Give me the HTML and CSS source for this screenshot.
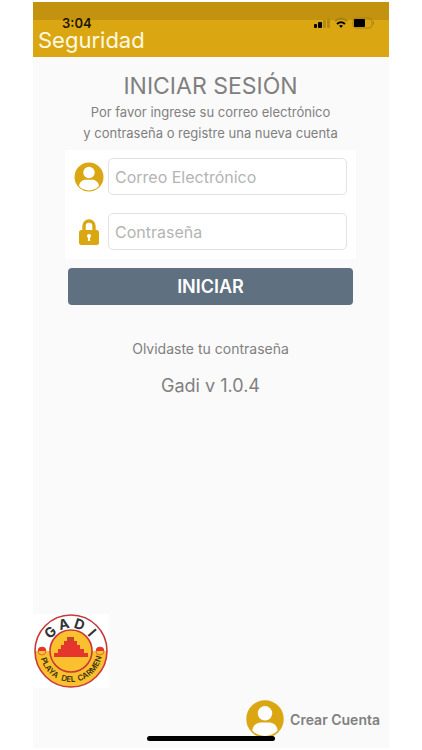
FILE: index.html
```html
<!DOCTYPE html>
<html lang="es">
<head>
<meta charset="utf-8">
<meta name="viewport" content="width=device-width, initial-scale=1">
<title>Seguridad</title>
<link rel="stylesheet" href="styles.css">
</head>
<body>
<div class="app">
  <header class="header">
    <div class="status">
      <span class="time">3:04</span>
      <svg class="status-icons" width="62" height="12" viewBox="0 0 62 12" aria-hidden="true">
        <rect x="0" y="7" width="3" height="4" rx="1"/>
        <rect x="4" y="5" width="4" height="6" rx="1"/>
        <g fill="#b58b12"><rect x="9" y="3" width="3" height="8" rx="1"/><rect x="13" y="1" width="3" height="10" rx="1"/></g>
        <g fill="none" stroke-width="2">
          <path d="M21 4Q27 -1 33 4" stroke="#a98110"/>
          <path d="M23 7Q27 3.5 31 7" stroke="#000"/>
        </g>
        <path d="M25 8.6Q27 7.3 29 8.6L27 11Z"/>
        <rect x="39" y="1" width="19" height="10" rx="3" fill="none" stroke="#a98110"/>
        <rect x="40" y="2" width="11" height="8" rx="1"/>
        <path d="M59 4q2 2 0 4z" fill="#a98110"/>
      </svg>
    </div>
    <div class="title">Seguridad</div>
  </header>
  <main class="main">
    <h1 class="heading">INICIAR SESIÓN</h1>
    <p class="intro">Por favor ingrese su correo electrónico<br>y contraseña o registre una nueva cuenta</p>
    <form class="login">
      <div class="fields">
        <div class="field">
          <label class="field-icon" for="email" aria-label="Correo Electrónico">
            <svg width="30" height="30" viewBox="0 0 30 30" aria-hidden="true">
              <circle cx="15" cy="15" r="14.5" fill="#daa712"/>
              <circle cx="15" cy="10.500" r="5.700" fill="#fff"/>
              <path d="M5 24C5.500 19.500 9 17.700 12 17.700h6c3 0 6.500 1.800 7 6.300A13.500 13.500 0 0 1 5 24Z" fill="#fff"/>
            </svg>
          </label>
          <input class="input" id="email" type="email" placeholder="Correo Electrónico">
        </div>
        <div class="field">
          <label class="field-icon" for="password" aria-label="Contraseña">
            <svg width="22" height="28" viewBox="0 0 22 28" aria-hidden="true">
              <path d="M6 13V8a5 5 0 0 1 10 0v5" fill="none" stroke="#daa712" stroke-width="3.400"/>
              <rect x="1" y="12" width="20" height="15" rx="2.500" fill="#daa712"/>
              <circle cx="11" cy="18" r="2" fill="#fff"/>
              <path d="M10.300 18h1.400l.5 5h-2.400z" fill="#fff"/>
            </svg>
          </label>
          <input class="input" id="password" type="password" placeholder="Contraseña">
        </div>
      </div>
      <button class="submit" type="button">INICIAR</button>
    </form>
    <a class="forgot" href="#">Olvidaste tu contraseña</a>
    <p class="version">Gadi v 1.0.4</p>
  </main>
  <footer class="footer">
    <svg class="logo" width="76" height="74" viewBox="0 0 76 74" role="img" aria-label="Gadi Playa del Carmen">
      <defs><path id="lower-arc" d="M7 37a31 31 0 0 0 62 0"/></defs>
      <rect width="76" height="74" fill="#fff"/>
      <path d="M2 37a36 36 0 0 0 72 0z" fill="#fac02d"/>
      <circle cx="38" cy="37" r="36" fill="none" stroke="#c9383c" stroke-width="1.600"/>
      <circle cx="38" cy="37" r="21" fill="#fac02d" stroke="#c9383c" stroke-width="1.600"/>
      <g fill="#e5352c">
        <rect x="34" y="23" width="7" height="4" fill="#b94b2b"/>
        <rect x="31" y="27" width="13" height="4"/>
        <rect x="28" y="31" width="19" height="4"/>
        <rect x="25" y="35" width="26" height="4"/>
        <rect x="21" y="39" width="34" height="4"/>
      </g>
      <g fill="#fac02d" stroke="#c9383c" stroke-width=".6"><circle cx="9" cy="37" r="4"/><circle cx="67" cy="37" r="4"/></g>
      <path d="M5 37a4 4 0 0 1 8 0zM63 37a4 4 0 0 1 8 0z" fill="#e5352c"/>
      <g class="logo-name">
        <text x="38" y="14" transform="rotate(-48 38 37)">G</text>
        <text x="38" y="14" transform="rotate(-15 38 37)">A</text>
        <text x="38" y="14" transform="rotate(18 38 37)">D</text>
        <text x="38" y="14" transform="rotate(49 38 37)">I</text>
      </g>
      <g class="logo-place">
        <text><textPath href="#lower-arc" startOffset="21%">PLAYA</textPath></text>
        <text><textPath href="#lower-arc" startOffset="47%">DEL</textPath></text>
        <text><textPath href="#lower-arc" startOffset="76%">CARMEN</textPath></text>
      </g>
    </svg>
    <a class="create" href="#">
      <svg width="38" height="38" viewBox="0 0 30 30" aria-hidden="true">
        <circle cx="15" cy="15" r="14.800" fill="#daa712"/>
        <circle cx="15" cy="10.500" r="5.700" fill="#fff"/>
        <path d="M5 24C5.500 19.500 9 17.700 12 17.700h6c3 0 6.500 1.800 7 6.300A13.500 13.500 0 0 1 5 24Z" fill="#fff"/>
      </svg>
      <span>Crear Cuenta</span>
    </a>
  </footer>
  <div class="home-bar"></div>
</div>
</body>
</html>
```
FILE: styles.css
```css
* {
  box-sizing: border-box;
}

body {
  margin: 0;
  padding: 2px 33px;
  background: #fff;
  color: #808080;
  font-family: Inter, "Liberation Sans", sans-serif;
}

.app {
  position: relative;
  display: flex;
  flex-direction: column;
  min-height: calc(100vh - 4px);
  background: #fafafa;
}

.header {
  padding: 15px 5px 5px;
  background: linear-gradient(#c3930f 18px, #daa712 18px);
}

.status {
  display: flex;
  align-items: center;
  justify-content: space-between;
  height: 12px;
  padding: 0 8px 0 24px;
}

.time {
  color: #1c1505;
  font-size: 13px;
  font-weight: 600;
  line-height: 12px;
}

.title {
  color: #fff9e2;
  font-size: 22px;
  line-height: 23px;
}

.main {
  display: flex;
  flex-direction: column;
  align-items: center;
  padding: 13px 33px 0 32px;
}

.heading {
  margin: 0;
  font-size: 23px;
  font-weight: 400;
  line-height: 32px;
}

.intro {
  margin: 0;
  font-size: 13px;
  line-height: 21px;
  text-align: center;
}

.login {
  display: flex;
  flex-direction: column;
  align-self: stretch;
  gap: 9px;
  margin-top: 6px;
}

.fields {
  display: flex;
  flex-direction: column;
  gap: 18px;
  padding: 8px 9px 9px;
  background: #fff;
}

.field {
  display: flex;
  align-items: center;
  gap: 4px;
}

.field-icon {
  display: flex;
  justify-content: center;
  width: 30px;
}

.input {
  flex: 1;
  min-width: 0;
  height: 37px;
  padding: 0 6px;
  border: 1px solid #e2e2e2;
  border-radius: 5px;
  background: #fff;
  color: #555;
  font: 16px Inter, "Liberation Sans", sans-serif;
}

.input::placeholder {
  color: #b4b4b4;
}

.submit {
  height: 37px;
  margin: 0 3px;
  border: 0;
  border-radius: 4px;
  background: #5f7080;
  color: #fff;
  font: 600 18px Inter, "Liberation Sans", sans-serif;
}

.forgot {
  margin-top: 34px;
  color: inherit;
  font-size: 14px;
  line-height: 20px;
  text-decoration: none;
}

.version {
  margin: 15px 0 0;
  font-size: 18px;
  line-height: 24px;
}

.footer {
  display: flex;
  flex-direction: column;
  align-items: flex-start;
  gap: 12px;
  margin-top: auto;
  padding-bottom: 10px;
}

.logo {
  display: block;
}

.logo-name {
  fill: #333;
  font-size: 14px;
  font-weight: 700;
  text-anchor: middle;
}

.logo-place {
  fill: #3b3012;
  font-size: 8px;
  font-weight: 600;
  text-anchor: middle;
}

.create {
  display: flex;
  align-items: center;
  align-self: flex-end;
  gap: 6px;
  margin-right: 9px;
  color: inherit;
  font-size: 14px;
  font-weight: 600;
  text-decoration: none;
}

.home-bar {
  position: absolute;
  bottom: 7px;
  left: 32%;
  width: 36%;
  height: 5px;
  border-radius: 3px;
  background: #000;
}
```
